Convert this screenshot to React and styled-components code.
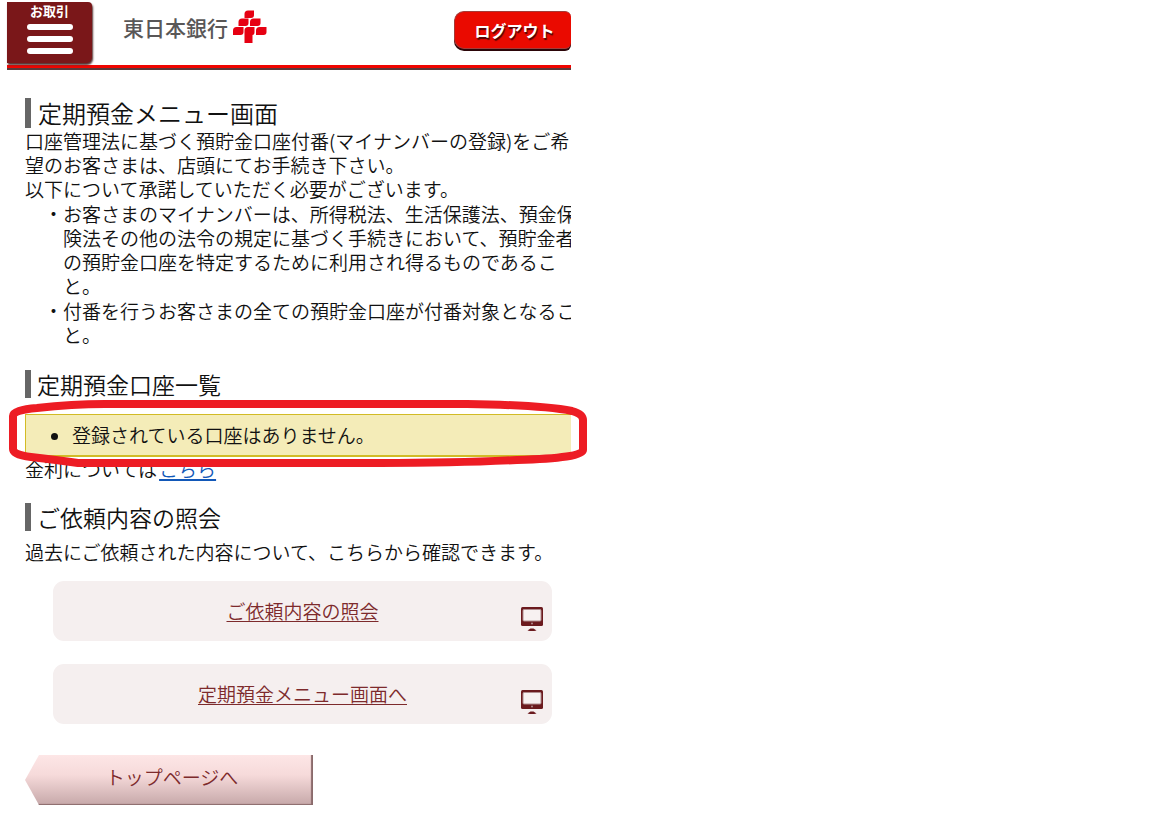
import React from "react";
import styled, { createGlobalStyle } from "styled-components";

const GlobalStyle = createGlobalStyle`
  * {
    box-sizing: border-box;
  }

  body {
    margin: 0;
    background: #ffffff;
    color: #111111;
    font-family: "Noto Sans CJK JP", "Noto Sans", sans-serif;
    font-size: 19px;
    font-weight: 350;
    line-height: 24px;
  }
`;

const Page = styled.div`
  max-width: 571px;
  padding: 2px 0 0 7px;
`;

const Header = styled.header`
  display: flex;
  align-items: flex-start;
  height: 68px;
  border-bottom: 2px solid #5a3a3a;
  box-shadow: inset 0 -3px 0 #f00500;
`;

const MenuButton = styled.button`
  display: flex;
  flex-direction: column;
  align-items: center;
  gap: 4px;
  width: 85px;
  height: 61px;
  padding: 0 0 8px;
  border: 0;
  border-radius: 0 4px 6px 0;
  background: #7a1719;
  box-shadow: 1px 2px 2px #55302f;
  color: #ffffff;
  font-family: inherit;
  font-size: 13px;
  font-weight: 700;
  line-height: 18px;
`;

const Bars = styled.span`
  display: flex;
  flex-direction: column;
  gap: 6px;
`;

const Bar = styled.span`
  width: 46px;
  height: 6px;
  border-radius: 3px;
  background: #ffffff;
`;

const Brand = styled.div`
  display: flex;
  align-items: center;
  gap: 5px;
  margin-left: 31px;
  padding-top: 8px;
  color: #595757;
  font-size: 21px;
  font-weight: 500;
  line-height: 34px;
`;

const LogoutButton = styled.button`
  width: 117px;
  height: 38px;
  margin: 9px 0 0 auto;
  padding: 0 0 0 3px;
  border: 1px solid #a33b38;
  border-right: 0;
  border-radius: 10px 6px 6px 10px;
  background: #ea0a00;
  box-shadow: 0 2px 0 #2b0508;
  color: #ffffff;
  font-family: inherit;
  font-size: 16px;
  font-weight: 700;
  text-shadow: 1px 2px 1px #4d0505;
`;

const Main = styled.main`
  padding: 28px 0 0 18px;
`;

const Heading = styled.h2`
  margin: 0;
  padding-left: ${(props) => (props.$large ? 7 : 6)}px;
  border-left: 6px solid #666666;
  font-size: ${(props) => (props.$large ? 24 : 23)}px;
  font-weight: 350;
  line-height: ${(props) => (props.$large ? 30 : 28)}px;
`;

const Section = styled.section`
  margin-bottom: 22px;
`;

const Text = styled.p`
  margin: ${(props) => props.$top || 0}px 0 0;
  white-space: nowrap;
`;

const Terms = styled.ul`
  display: grid;
  gap: 1px;
  margin: 1px 0 23px;
  padding: 0 0 0 38px;
  overflow: hidden;
  list-style: none;
  white-space: nowrap;

  li::before {
    content: "・";
    margin-left: -19px;
  }
`;

const NoticeArea = styled.div`
  position: relative;
  margin-top: 16px;
`;

const Notice = styled.ul`
  height: 43px;
  margin: 0;
  padding: 8px 0 0 46px;
  border: 2px solid #d2bb25;
  border-width: 1px 0 2px 1px;
  background: #f4ecb8;
`;

const Mark = styled.svg`
  position: absolute;
  top: -16px;
  left: -18px;
  pointer-events: none;
`;

const InlineLink = styled.a`
  margin-left: 2px;
  color: #1258b8;
  text-decoration-thickness: 2px;
  text-underline-offset: 2px;
`;

const LinkList = styled.nav`
  display: grid;
  gap: 23px;
  margin: 17px 19px 31px 28px;
`;

const CardLink = styled.a`
  display: grid;
  grid-template-columns: 1fr 22px;
  height: 60px;
  padding: 18px 9px 9px 31px;
  border-radius: 11px;
  background: #f5efef;
  color: #7d2a2c;
  text-align: center;
  text-decoration-thickness: 1px;
  text-underline-offset: 2px;

  svg {
    align-self: end;
  }
`;

const TopLink = styled.a`
  display: block;
  width: 288px;
  height: 50px;
  padding-left: 6px;
  clip-path: polygon(0 50%, 14px 0, 100% 0, 100% 100%, 14px 100%);
  background: linear-gradient(#fde6e6, #f6dada 40%, #c6a8a9);
  box-shadow: inset -2px -1px 1px #8a6a6b;
  color: #7d2a2c;
  line-height: 44px;
  text-align: center;
  text-decoration: none;
`;

function Logo() {
  return (
    <svg width="34" height="34" viewBox="0 0 34 34" fill="#e60012" aria-hidden="true">
      <path d="M15 .5h6V5q0 3-3 3h-6.500V4q0-3.500 3.500-3.500z" />
      <path d="M9 8.500h6.500V13q0 3-3 3H5.500v-4q0-3.500 3.500-3.500z" />
      <path d="M20.500 8.500h7V13q0 3-3 3H17v-4q0-3.500 3.500-3.500z" />
      <path d="M3.500 17h7v5q0 3-3 3H0v-4.500Q0 17 3.500 17z" />
      <path d="M15 17h6.500v5q0 3-2 3v8h-8V20.500q0-3.500 3.500-3.500z" />
      <path d="M26.500 17h7v5q0 3-3 3H23v-4.500q0-3.500 3.500-3.500z" />
    </svg>
  );
}

function Monitor() {
  return (
    <svg width="22" height="25" viewBox="0 0 22 25" aria-hidden="true">
      <rect width="22" height="19" rx="1.5" fill="#6b1a1e" />
      <rect x="2" y="2.500" width="18" height="11.500" rx="1" fill="#f7f1f1" stroke="#b08c8e" />
      <circle cx="11" cy="16.500" r="1" fill="#b08c8e" />
      <path d="M9.500 21.500h3l3 2q-4.500 1-9 0z" fill="#6b1a1e" />
    </svg>
  );
}

export default function App() {
  return (
    <>
      <GlobalStyle />
      <Page>
        <Header>
          <MenuButton type="button">
            お取引
            <Bars>
              <Bar />
              <Bar />
              <Bar />
            </Bars>
          </MenuButton>
          <Brand>
            東日本銀行
            <Logo />
          </Brand>
          <LogoutButton type="button">ログアウト</LogoutButton>
        </Header>
        <Main>
          <Section>
            <Heading as="h1" $large>
              定期預金メニュー画面
            </Heading>
            <Text $top={1}>
              口座管理法に基づく預貯金口座付番(マイナンバーの登録)をご希
              <br />
              望のお客さまは、店頭にてお手続き下さい。
              <br />
              以下について承諾していただく必要がございます。
            </Text>
            <Terms>
              <li>
                お客さまのマイナンバーは、所得税法、生活保護法、預金保
                <br />
                険法その他の法令の規定に基づく手続きにおいて、預貯金者
                <br />
                の預貯金口座を特定するために利用され得るものであるこ
                <br />
                と。
              </li>
              <li>
                付番を行うお客さまの全ての預貯金口座が付番対象となるこ
                <br />
                と。
              </li>
            </Terms>
          </Section>
          <Section>
            <Heading>定期預金口座一覧</Heading>
            <NoticeArea>
              <Notice>
                <li>登録されている口座はありません。</li>
              </Notice>
              <Mark width="580" height="70" viewBox="0 0 580 70" fill="none" aria-hidden="true">
                <path
                  d="M6 18Q6 12 30 10Q65 6 98 6H460Q535 7 565 13Q576 16 576 22V52Q576 60 510 62Q450 65 373 65H71Q50 62 24 59Q6 57 6 51Z"
                  stroke="#ed1c24"
                  strokeWidth="8"
                />
              </Mark>
            </NoticeArea>
            <Text>
              金利については<InlineLink href="#rates">こちら</InlineLink>
            </Text>
          </Section>
          <Section>
            <Heading>ご依頼内容の照会</Heading>
            <Text $top={9}>過去にご依頼された内容について、こちらから確認できます。</Text>
            <LinkList>
              <CardLink href="#requests">
                ご依頼内容の照会
                <Monitor />
              </CardLink>
              <CardLink href="#menu">
                定期預金メニュー画面へ
                <Monitor />
              </CardLink>
            </LinkList>
            <TopLink href="#top">トップページへ</TopLink>
          </Section>
        </Main>
      </Page>
    </>
  );
}
